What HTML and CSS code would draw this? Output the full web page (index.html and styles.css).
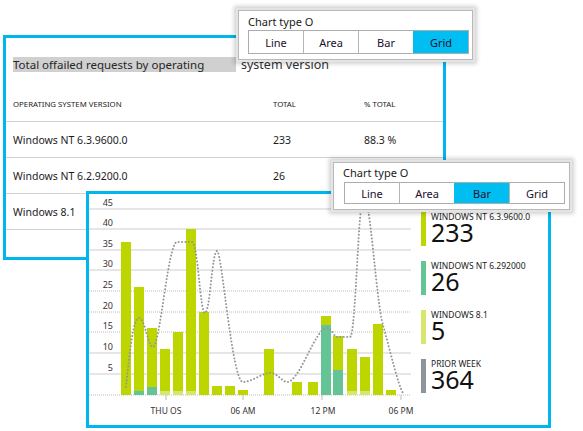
FILE: index.html
```html
<!DOCTYPE html>
<html>
<head>
<meta charset="utf-8">
<link rel="stylesheet" href="styles.css">
</head>
<body>
<div class="desk">
  <section class="win win-table">
    <div class="title-row"><span class="title-hl">Total offailed requests by operating</span><span class="title-rest">system version</span></div>
    <div class="tbl">
      <div class="tr th"><span>OPERATING SYSTEM VERSION</span><span>TOTAL</span><span>% TOTAL</span></div>
      <div class="tr"><span>Windows NT 6.3.9600.0</span><span>233</span><span>88.3 %</span></div>
      <div class="tr"><span>Windows NT 6.2.9200.0</span><span>26</span><span></span></div>
      <div class="tr"><span>Windows 8.1</span><span></span><span></span></div>
    </div>
  </section>

  <section class="win win-chart">
    <svg class="chart" width="330" height="231" viewBox="89 194 330 231">
      <g class="grid">
        <line x1="89" x2="411" y1="209" y2="209"/>
        <line x1="89" x2="411" y1="229" y2="229"/>
        <line x1="89" x2="411" y1="250" y2="250"/>
        <line x1="89" x2="411" y1="270" y2="270"/>
        <line class="dot" x1="89" x2="411" y1="291" y2="291"/>
        <line class="dot" x1="89" x2="411" y1="312" y2="312"/>
        <line class="dot" x1="89" x2="411" y1="332" y2="332"/>
        <line x1="89" x2="411" y1="353" y2="353"/>
        <line x1="89" x2="411" y1="374" y2="374"/>
        <line class="dot" x1="89" x2="411" y1="395" y2="395"/>
      </g>
      <g class="ylab">
        <text x="113" y="206">45</text>
        <text x="113" y="226">40</text>
        <text x="113" y="247">35</text>
        <text x="113" y="267">30</text>
        <text x="113" y="288">25</text>
        <text x="113" y="309">20</text>
        <text x="113" y="329">15</text>
        <text x="113" y="350">10</text>
        <text x="113" y="371">5</text>
      </g>
      <g class="bars">
        <rect class="b1" x="121" y="242" width="10" height="153"/>
        <rect class="b1" x="134" y="287" width="10" height="108"/>
        <rect class="b2" x="134" y="391" width="10" height="4"/>
        <rect class="b1" x="147" y="328" width="10" height="67"/>
        <rect class="b2" x="147" y="387" width="10" height="8"/>
        <rect class="b1" x="160" y="349" width="10" height="46"/>
        <rect class="b3" x="160" y="391" width="10" height="4"/>
        <rect class="b1" x="173" y="332" width="10" height="63"/>
        <rect class="b3" x="173" y="391" width="10" height="4"/>
        <rect class="b1" x="186" y="229" width="10" height="166"/>
        <rect class="b3" x="186" y="391" width="10" height="4"/>
        <rect class="b1" x="199" y="312" width="10" height="83"/>
        <rect class="b1" x="212" y="386" width="10" height="9"/>
        <rect class="b1" x="225" y="386" width="10" height="9"/>
        <rect class="b1" x="238" y="390" width="10" height="5"/>
        <rect class="b1" x="264" y="349" width="10" height="46"/>
        <rect class="b1" x="292" y="382" width="10" height="13"/>
        <rect class="b1" x="308" y="382" width="10" height="13"/>
        <rect class="b1" x="321" y="316" width="10" height="79"/>
        <rect class="b2" x="321" y="325" width="10" height="70"/>
        <rect class="b1" x="333" y="336" width="10" height="59"/>
        <rect class="b2" x="333" y="370" width="10" height="25"/>
        <rect class="b1" x="347" y="349" width="10" height="46"/>
        <rect class="b3" x="347" y="391" width="10" height="4"/>
        <rect class="b1" x="360" y="357" width="10" height="38"/>
        <rect class="b3" x="360" y="391" width="10" height="4"/>
        <rect class="b1" x="373" y="324" width="10" height="71"/>
        <rect class="b1" x="386" y="390" width="10" height="5"/>
      </g>
      <path class="prior" d="M126,387 C130,350 133,318 139,318 C145,318 148,347 153,347 C160,347 168,242 177,242 L192,242 C198,242 200,313 205,313 C210,313 212,251 217,251 C222,251 232,382 243,382 C252,382 262,373 270,373 C278,373 282,382 287,382 C300,382 315,328 327,328 C332,328 334,337 337,337 L350,337 C356,337 358,195 364,195 C370,195 376,300 383,325 C390,350 398,385 403,393"/>
      <g class="ticks">
        <line x1="166" x2="166" y1="395" y2="400"/>
        <line x1="243" x2="243" y1="395" y2="400"/>
        <line x1="322" x2="322" y1="395" y2="400"/>
        <line x1="401" x2="401" y1="395" y2="400"/>
      </g>
      <g class="xlab">
        <text x="166" y="414">THU OS</text>
        <text x="243" y="414">06 AM</text>
        <text x="323" y="414">12 PM</text>
        <text x="401" y="414">06 PM</text>
      </g>
    </svg>
    <div class="legend">
      <div class="item"><i class="sw sw1"></i><div class="txt"><div class="lab">WINDOWS NT 6.3.9600.0</div><div class="num">233</div></div></div>
      <div class="item"><i class="sw sw2"></i><div class="txt"><div class="lab">WINDOWS NT 6.292000</div><div class="num">26</div></div></div>
      <div class="item"><i class="sw sw3"></i><div class="txt"><div class="lab">WINDOWS 8.1</div><div class="num">5</div></div></div>
      <div class="item"><i class="sw sw4"></i><div class="txt"><div class="lab">PRIOR WEEK</div><div class="num">364</div></div></div>
    </div>
  </section>

  <div class="popup popup-a">
    <div class="pop-title">Chart type O</div>
    <div class="seg"><span>Line</span><span>Area</span><span>Bar</span><span class="on">Grid</span></div>
  </div>

  <div class="popup popup-b">
    <div class="pop-title">Chart type O</div>
    <div class="seg"><span>Line</span><span>Area</span><span class="on">Bar</span><span>Grid</span></div>
  </div>
</div>
</body>
</html>
```

FILE: styles.css
```css
html, body {
  margin: 0;
  padding: 0;
  background: #fff;
}
body {
  font-family: "Segoe UI", "Noto Sans", sans-serif;
  color: #1c1c1c;
}
.desk {
  position: relative;
  width: 583px;
  height: 431px;
  overflow: hidden;
}
.win {
  position: absolute;
  box-sizing: border-box;
  border: 3px solid #00b6ee;
  background: #fff;
}
.win-table {
  left: 3px;
  top: 35px;
  width: 443px;
  height: 225px;
  padding-top: 19px;
}
.title-row {
  display: flex;
  align-items: center;
  height: 15px;
  padding-left: 7px;
  white-space: nowrap;
}
.title-hl {
  display: inline-block;
  width: 223px;
  height: 15px;
  line-height: 15px;
  font-size: 11.5px;
  background: #d0d0d0;
  color: #262626;
}
.title-rest {
  margin-left: 5px;
  font-size: 12.5px;
  line-height: 15px;
  color: #333;
}
.tbl {
  margin-top: 14px;
}
.tr {
  display: grid;
  grid-template-columns: 260px 91px 1fr;
  align-items: center;
  height: 35px;
  border-bottom: 1px solid #d2d2d2;
  padding-left: 7px;
  font-size: 10.5px;
  white-space: nowrap;
}
.tr.th {
  font-size: 7.8px;
  color: #222;
}
.win-chart {
  left: 86px;
  top: 191px;
  width: 465px;
  height: 237px;
  display: flex;
}
.chart {
  display: block;
  flex: none;
}
.grid line {
  stroke: #cdcdcd;
  stroke-width: 1;
}
.grid line.dot {
  stroke-dasharray: 1 1;
  stroke: #bdbdbd;
}
.ylab text {
  font-size: 9px;
  fill: #333;
  text-anchor: end;
}
.xlab text {
  font-size: 8.5px;
  fill: #333;
  text-anchor: middle;
}
.ticks line {
  stroke: #bbb;
  stroke-width: 1;
}
.b1 { fill: #bdd600; }
.b2 { fill: #64c496; }
.b3 { fill: #d6e66e; }
.prior {
  fill: none;
  stroke: #969696;
  stroke-width: 2;
  stroke-dasharray: 0.01 3.4;
  stroke-linecap: round;
}
.legend {
  display: flex;
  flex-direction: column;
  gap: 15px;
  padding-top: 18px;
  margin-left: 2px;
}
.item {
  display: flex;
  gap: 5px;
  height: 34px;
}
.sw {
  display: block;
  width: 5px;
  height: 34px;
  flex: none;
}
.sw1 { background: #bdd600; }
.sw2 { background: #64c496; }
.sw3 { background: #d6e66e; }
.sw4 { background: #8e9499; }
.txt {
  display: flex;
  flex-direction: column;
}
.lab {
  font-size: 8.5px;
  line-height: 9px;
  height: 9px;
  color: #222;
  white-space: nowrap;
}
.num {
  font-size: 25px;
  line-height: 23px;
  height: 23px;
  color: #111;
}
.popup {
  position: absolute;
  box-sizing: border-box;
  background: #fff;
  border: 1px solid #b8b8b8;
  box-shadow: 0 0 0 2px #e4e4e4, 0 0 4px 4px rgba(0, 0, 0, 0.18);
}
.popup-a {
  left: 238px;
  top: 10px;
  width: 235px;
  height: 50px;
  padding: 4px 0 0 9px;
}
.popup-b {
  left: 333px;
  top: 162px;
  width: 237px;
  height: 48px;
  padding: 3px 0 0 9px;
}
.pop-title {
  font-size: 11px;
  line-height: 13px;
  color: #1a1a1a;
}
.seg {
  display: flex;
  border: 1px solid #adadad;
  width: 219px;
}
.popup-a .seg { height: 22px; margin-top: 2px; }
.popup-b .seg { height: 20px; margin-top: 3px; margin-left: 1px; }
.seg span {
  flex: 1;
  display: flex;
  align-items: center;
  justify-content: center;
  font-size: 11px;
  color: #22102a;
  border-left: 1px solid #b5b5b5;
}
.seg span:first-child {
  border-left: none;
}
.seg span.on {
  background: #00bdf2;
  border-left-color: #00bdf2;
}
```
